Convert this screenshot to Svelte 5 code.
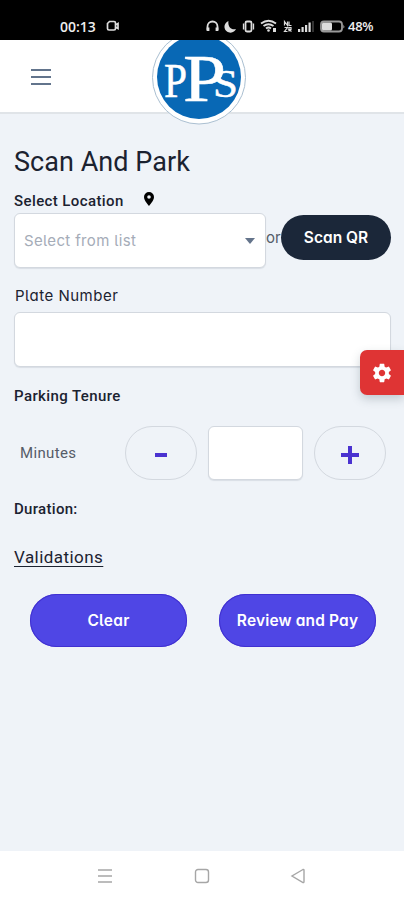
<script>
    let location = $state('');
    let plate = $state('');
    let minutes = $state('');

    const step = (n) => {
        minutes = String(Math.max(0, Number(minutes || 0) + n));
    };
</script>

<div class="screen">
    <div class="status">
        <span class="clock">00:13</span>
        <svg class="camera" width="14" height="12" viewBox="0 0 14 12">
            <path d="M3.500 1.500h4.500q1.500 0 1.500 1.500v5.500q0 1.500-1.500 1.500H3Q1.500 10 1.500 8.500V3.500zM9.500 5 12 3.500v5L9.500 7" />
        </svg>
        <svg class="indicators" width="142" height="18" viewBox="204 17 142 18">
            <g class="line">
                <path d="M207.500 30v-3.500a5 5 0 0 1 10 0V30" />
                <path d="M208 27.500v3.500M217 27.500v3.500" stroke-width="2.800" />
                <rect x="245.500" y="21.500" width="6" height="10" rx="1.500" />
                <path d="M243.500 23.500v6M253.500 23.500v6" stroke-width="1.300" />
                <path d="M261 23.500q7.500-5.500 15 0M263.500 26q5-3.500 10 0M266 28.500q2.500-2 5 0" />
            </g>
            <path d="M228.500 21a6 6 0 1 0 7.500 8c-5 1.500-8.500-3-7.500-8z" />
            <circle cx="268.500" cy="30.500" r="1.300" />
            <path d="M273 28h3v4h-3z" />
            <g class="line thin">
                <path d="M284.500 25.500v-4l3 4v-4M289 21.500v4h2.500M284.500 27.500h3l-3 4h3M289 31.500v-4h2v2h-2l2.500 2" />
            </g>
            <path d="M298 29h2.200v3h-2.200zM301.500 27h2.200v5h-2.200zM305 25h2.200v7h-2.200zM308.500 22.500h2.200v9.500h-2.200z" />
            <path class="dim" d="M312 21h2v11h-2z" />
            <rect class="line dim-line" x="321" y="21.500" width="21" height="10" rx="3" />
            <rect x="322" y="22.500" width="10" height="8" rx="1.500" />
            <path d="M343.500 24.500v4q1.500-2 0-4z" />
        </svg>
        <span class="battery">48%</span>
    </div>

    <header class="topbar">
        <button class="menu" aria-label="Menu"><i></i><i></i><i></i></button>
        <div class="logo-clip">
            <svg width="96" height="86" viewBox="151 40 96 86">
                <circle cx="199" cy="77.500" r="46.500" fill="#fff" stroke="#aabfd1" stroke-width="1" />
                <circle cx="199" cy="77" r="42" fill="#0868b5" />
                <g class="letters">
                    <text x="164" y="97" font-size="48" textLength="23" lengthAdjust="spacingAndGlyphs">P</text>
                    <text x="183" y="100.500" font-size="67" textLength="43" lengthAdjust="spacingAndGlyphs">P</text>
                    <text x="213" y="96.500" font-size="39" textLength="25" lengthAdjust="spacingAndGlyphs">S</text>
                </g>
            </svg>
        </div>
    </header>

    <main>
        <h1>Scan And Park</h1>

        <div class="label-row">
            <span class="label location">Select Location</span>
            <svg width="10" height="14" viewBox="0 0 10 14">
                <path d="M5 0a5 5 0 0 0-5 5c0 3.500 5 9 5 9s5-5.500 5-9a5 5 0 0 0-5-5zm0 3.200a1.800 1.800 0 1 1 0 3.600 1.800 1.800 0 0 1 0-3.600z" />
            </svg>
        </div>
        <div class="location-row">
            <div class="field select">
                <span>{location || 'Select from list'}</span>
                <i class="caret"></i>
            </div>
            <span class="or">or</span>
            <button class="scan">Scan QR</button>
        </div>

        <label class="plate-label" for="plate">Plate Number</label>
        <input class="field plate" id="plate" bind:value={plate} />

        <div class="label tenure">Parking Tenure</div>
        <div class="stepper">
            <span class="minutes">Minutes</span>
            <button class="round" aria-label="Less" onclick={() => step(-1)}><i class="minus"></i></button>
            <input class="field amount" aria-label="Minutes" bind:value={minutes} />
            <button class="round" aria-label="More" onclick={() => step(1)}><i class="minus plus"></i></button>
        </div>

        <div class="label duration">Duration:</div>
        <div class="validations"><span>Validations</span></div>

        <div class="actions">
            <button class="primary clear">Clear</button>
            <button class="primary">Review and Pay</button>
        </div>

        <button class="settings" aria-label="Settings">
            <svg width="22" height="22" viewBox="0 0 24 24">
                <path d="M19.430 12.980c.04-.32.07-.64.07-.98s-.03-.66-.07-.98l2.110-1.650c.19-.15.24-.42.12-.64l-2-3.460c-.12-.22-.39-.3-.61-.22l-2.490 1c-.52-.4-1.080-.73-1.690-.98l-.38-2.650C14.460 2.180 14.250 2 14 2h-4c-.25 0-.46.18-.49.42l-.38 2.650c-.61.25-1.170.59-1.690.98l-2.490-1c-.23-.09-.49 0-.61.22l-2 3.460c-.13.22-.07.49.12.64l2.110 1.650c-.04.32-.07.65-.07.98s.03.66.07.98l-2.110 1.650c-.19.15-.24.42-.12.64l2 3.460c.12.22.39.3.61.22l2.490-1c.52.4 1.080.73 1.690.98l.38 2.650c.03.24.24.42.49.42h4c.25 0 .46-.18.49-.42l.38-2.650c.61-.25 1.170-.59 1.690-.98l2.490 1c.23.09.49 0 .61-.22l2-3.460c.12-.22.07-.49-.12-.64l-2.110-1.650zM12 15.500c-1.930 0-3.500-1.570-3.500-3.500s1.570-3.500 3.500-3.500 3.500 1.570 3.500 3.500-1.570 3.500-3.500 3.500z" />
            </svg>
        </button>
    </main>

    <nav>
        <svg width="16" height="16" viewBox="0 0 16 16"><path d="M1 2h14M1 8h14M1 14h14" /></svg>
        <svg width="16" height="16" viewBox="0 0 16 16"><rect x="1.500" y="1.500" width="13" height="13" rx="2.500" /></svg>
        <svg width="16" height="16" viewBox="0 0 16 16"><path d="M13 1.500 2 8l11 6.500q1 .3 1-1v-11q0-1.300-1-1z" /></svg>
    </nav>
</div>

<style>
    :global(body) {
        margin: 0;
        background: #eff3f8;
    }

    * {
        box-sizing: border-box;
    }

    button {
        padding: 0;
        border: 0;
        background: none;
        font: inherit;
    }

    .screen {
        width: 404px;
        height: 900px;
        display: flex;
        flex-direction: column;
        overflow: hidden;
        font-family: Roboto, sans-serif;
        color: #1b2230;
        background: #eff3f8;
    }

    .status {
        height: 40px;
        display: flex;
        align-items: center;
        padding: 12px 0 0 60px;
        background: #000;
        color: #eee;
        font-family: "Open Sans", sans-serif;
        font-weight: 600;
    }

    .clock {
        width: 46px;
        font-size: 14px;
    }

    .camera {
        fill: none;
        stroke: #ddd;
        stroke-width: 1.7;
    }

    .indicators {
        margin-left: 84px;
        fill: #ddd;
    }

    .line {
        fill: none;
        stroke: #ddd;
        stroke-width: 1.8;
    }

    .thin {
        stroke-width: 1.2;
    }

    .dim {
        fill: #333;
    }

    .dim-line {
        stroke: #999;
    }

    .battery {
        margin-left: 2px;
        font-size: 13px;
        letter-spacing: -0.3px;
    }

    .topbar {
        height: 74px;
        flex: none;
        display: flex;
        align-items: flex-start;
        background: #fff;
        border-bottom: 2px solid #e0e4e8;
    }

    .menu {
        width: 20px;
        height: 16px;
        margin: 29px 0 0 31px;
        display: flex;
        flex-direction: column;
        justify-content: space-between;
    }

    .menu i {
        width: 20px;
        height: 2px;
        background: #62748c;
    }

    .logo-clip {
        height: 86px;
        margin-left: 100px;
        z-index: 1;
    }

    .letters {
        fill: #fff;
        stroke: #fff;
        stroke-width: 0.5;
        font-family: "Liberation Serif", serif;
    }

    main {
        position: relative;
        flex: 1;
        padding: 28px 13px 0 14px;
    }

    h1 {
        height: 40px;
        margin: 0;
        line-height: 40px;
        font-size: 27px;
        font-weight: 400;
        letter-spacing: 0.05px;
        white-space: nowrap;
    }

    .label-row {
        height: 31px;
        display: flex;
        align-items: center;
        padding-top: 7px;
    }

    .label {
        font-size: 15px;
        font-weight: 500;
        white-space: nowrap;
    }

    .location {
        width: 130px;
        letter-spacing: 0.4px;
    }

    .label-row svg {
        margin-top: -4px;
    }

    .location-row {
        display: flex;
        align-items: center;
    }

    .field {
        display: block;
        height: 55px;
        border: 1px solid #d3d8df;
        border-radius: 6px;
        background: #fff;
        box-shadow: 0 1px 1px #d9dee5;
    }

    .select {
        width: 252px;
        display: flex;
        align-items: center;
        justify-content: space-between;
        padding: 0 10px 0 9px;
        font: 400 15px Inter, sans-serif;
        font-feature-settings: "cv11", "cv05";
        letter-spacing: 0.35px;
        color: #a5acb8;
    }

    .caret {
        border: 5.5px solid transparent;
        border-top: 6px solid #64748b;
        border-bottom: 0;
    }

    .or {
        width: 15px;
        margin-top: -6px;
        font: 400 15px Inter, sans-serif;
        color: #555d69;
    }

    .scan {
        width: 110px;
        height: 45px;
        margin-top: -6px;
        border-radius: 23px;
        background: #1b2739;
        color: #fff;
        font: 600 15.5px Inter, sans-serif;
        font-feature-settings: "cv11", "cv05";
    }

    .plate-label {
        height: 44px;
        display: block;
        padding: 11px 0 0 1px;
        line-height: 34px;
        font-family: Inter, sans-serif;
        font-size: 15px;
        font-feature-settings: "cv11", "cv05";
        letter-spacing: 0.5px;
    }

    .plate {
        width: 377px;
    }

    .tenure {
        height: 59px;
        line-height: 58px;
        letter-spacing: 0.4px;
    }

    .stepper {
        display: flex;
        align-items: center;
    }

    .minutes {
        width: 111px;
        padding-left: 6px;
        font-size: 15px;
        letter-spacing: 0.35px;
        color: #555c68;
    }

    .round {
        width: 72px;
        height: 54px;
        display: flex;
        align-items: center;
        justify-content: center;
        border: 1px solid #d3d8df;
        border-radius: 27px;
    }

    .minus {
        position: relative;
        width: 12px;
        height: 4px;
        margin-top: 3px;
        background: #4a32d0;
    }

    .plus {
        width: 18px;
    }

    .plus::after {
        content: "";
        position: absolute;
        left: 7px;
        top: -7px;
        width: 4px;
        height: 18px;
        background: #4a32d0;
    }

    .amount {
        width: 95px;
        height: 54px;
        margin: 0 11px;
    }

    .duration {
        height: 58px;
        line-height: 59px;
        letter-spacing: 0.3px;
    }

    .validations {
        height: 56px;
        line-height: 38px;
        font-size: 17px;
        letter-spacing: 0.45px;
    }

    .validations span {
        text-decoration: underline;
        text-underline-offset: 3px;
        text-decoration-thickness: 1px;
    }

    .actions {
        display: flex;
        justify-content: space-between;
        padding: 0 15px 0 16px;
    }

    .primary {
        width: 157px;
        height: 53px;
        border-radius: 27px;
        background: #4f46e5;
        box-shadow: inset 0 0 0 1px #4030d0;
        color: #fff;
        font: 600 15.5px Inter, sans-serif;
        font-feature-settings: "cv11", "cv05";
        letter-spacing: 0.15px;
        white-space: nowrap;
    }

    .clear {
        letter-spacing: 0.3px;
    }

    /* Floating tab on the right edge */
    .settings {
        position: absolute;
        right: 0;
        top: 236px;
        width: 44px;
        height: 45px;
        display: flex;
        align-items: center;
        justify-content: center;
        border-radius: 7px 0 0 7px;
        background: #df3434;
        box-shadow: 0 4px 10px rgba(60, 80, 90, 0.25);
    }

    .settings svg {
        fill: #fff;
    }

    nav {
        height: 49px;
        display: flex;
        align-items: center;
        justify-content: space-between;
        padding: 0 98px 0 97px;
        background: #fff;
    }

    nav svg {
        fill: none;
        stroke: #a6a6a6;
        stroke-width: 1.4;
    }
</style>
